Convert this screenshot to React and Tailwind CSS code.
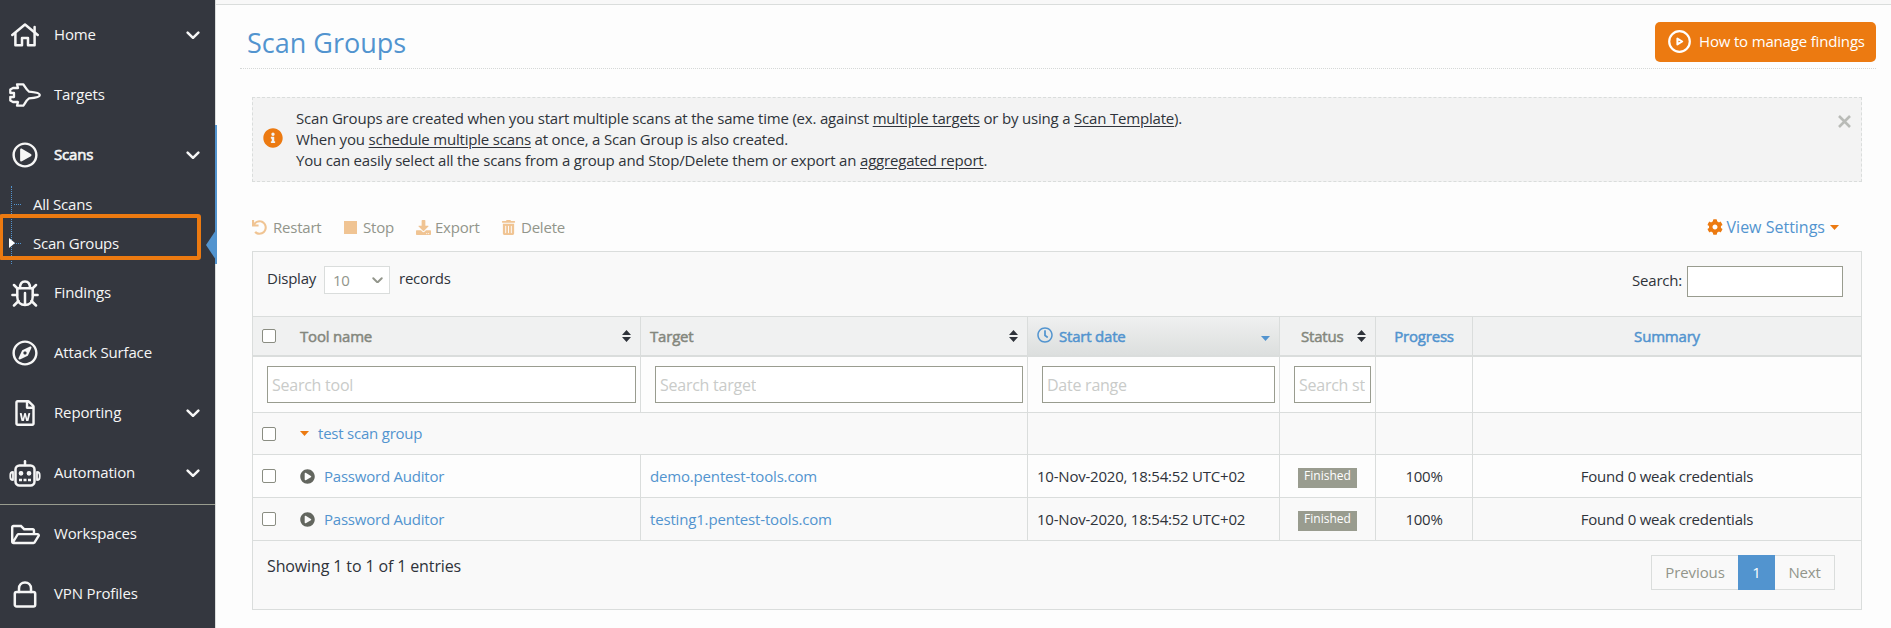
import React from "react";
import {
  FaRegCompass,
  FaRegFileWord,
  FaRegFolderOpen,
  FaRegPlayCircle,
  FaInfoCircle,
  FaUndo,
  FaDownload,
  FaTrashAlt,
  FaCog,
  FaRegClock,
  FaPlayCircle,
} from "react-icons/fa";

const stroke = {
  fill: "none",
  stroke: "currentColor",
  strokeWidth: 2.5,
  strokeLinejoin: "round",
  strokeLinecap: "round",
};

const HomeIcon = () => (
  <svg width="28" height="24" viewBox="0 0 28 24" {...stroke}>
    <path d="M1.3 12 L14 1.5 L26.7 12" />
    <path d="M4.4 10.5 V22.3 H11 V15 H17 V22.3 H23.6 V10.5" />
    <path d="M23.6 4 V9" />
  </svg>
);

const JetIcon = () => (
  <svg width="32" height="24" viewBox="0 0 32 24" {...stroke} strokeWidth="2.3">
    <path d="M8 1.3 H14.2 C16 3.5 17 6.5 20 8.6 C25 9 30.8 10.2 30.8 12 C30.8 13.8 25 15 20 15.4 C17 17.5 16 20.5 14.2 22.7 H8 L9 19 H4 L1.3 17.5 V14 H5 V10 H1.3 V6.5 L4 5 H9 Z" />
  </svg>
);

const BugIcon = () => (
  <svg width="28" height="27" viewBox="0 0 28 27" {...stroke}>
    <path d="M9 8 C9 3.3 11 1.5 14 1.5 S19 3.3 19 8" />
    <path d="M6.3 8.3 H21.7 V17 C21.7 22.5 18 25 14 25 S6.3 22.5 6.3 17 Z" />
    <path d="M14 13 V24 M1.4 15 H6 M22 15 H26.6 M3 5 L6.5 8.5 M25 5 L21.5 8.5 M3 25.5 L7.5 21 M25 25.5 L20.5 21" />
  </svg>
);

const RobotIcon = () => (
  <svg width="32" height="27" viewBox="0 0 32 27" {...stroke}>
    <path d="M16 1.2 V5" />
    <rect x="6.5" y="5.5" width="19" height="20" rx="4" />
    <path d="M4 12 C2 12 1.3 13 1.3 15 V17 C1.3 19 2 20 4 20 Z M28 12 C30 12 30.7 13 30.7 15 V17 C30.7 19 30 20 28 20 Z" strokeWidth="1.8" />
    <circle cx="12" cy="13.3" r="1.7" fill="currentColor" strokeWidth="1.4" />
    <circle cx="20" cy="13.3" r="1.7" fill="currentColor" strokeWidth="1.4" />
    <path d="M10 20 H22" strokeDasharray="3 1.5" strokeLinecap="butt" />
  </svg>
);

const LockIcon = () => (
  <svg width="24" height="27" viewBox="0 0 24 27" {...stroke}>
    <rect x="1.8" y="11" width="20.4" height="14.5" rx="1.8" />
    <path d="M6 11 V7.5 C6 3.8 8.6 1.5 12 1.5 S18 3.8 18 7.5 V11" />
  </svg>
);

const ChevronDown = ({ w = 14, className = "" }) => (
  <svg className={className} width={w} height={w * 0.62} viewBox="0 0 14 8.7" {...stroke}>
    <path d="M1.6 1.6 L7 7 L12.4 1.6" />
  </svg>
);

const Caret = ({ className = "" }) => (
  <svg className={className} width="9" height="5" viewBox="0 0 9 5" fill="currentColor">
    <path d="M0 0 H9 L4.5 5 Z" />
  </svg>
);

const SortIcon = () => (
  <svg className="shrink-0 text-[#2f333a]" width="9" height="12" viewBox="0 0 9 12" fill="currentColor">
    <path d="M0 5 L4.5 0 L9 5 Z M0 7 H9 L4.5 12 Z" />
  </svg>
);

function NavItem({ icon, label, chevron, active }) {
  return (
    <div className="flex h-[60px] shrink-0 items-center pl-[9px] pr-[15px] text-[15px] tracking-[-0.15px]">
      <span className="flex w-8 shrink-0 justify-center">{icon}</span>
      <span className={"mb-px ml-[13px] grow " + (active ? "[-webkit-text-stroke:0.6px]" : "")}>{label}</span>
      {chevron && <ChevronDown />}
    </div>
  );
}

function SubItem({ label }) {
  return (
    <div className="flex h-[39px] items-center pl-[14px] text-[15px] leading-none">
      <span className="w-[7px] border-t border-dotted border-[#5294cf]" />
      <span className="ml-3">{label}</span>
    </div>
  );
}

function Sidebar() {
  return (
    <nav className="relative flex h-[628px] w-[215px] shrink-0 flex-col bg-[#34373f] pt-[5px] text-[#f6f6f6]">
      <NavItem icon={<HomeIcon />} label="Home" chevron />
      <NavItem icon={<JetIcon />} label="Targets" />
      <NavItem icon={<FaRegPlayCircle size={26} />} label="Scans" chevron active />
      <div className="relative h-[78px] shrink-0">
        <SubItem label="All Scans" />
        <SubItem label="Scan Groups" />
        <div className="absolute left-[11px] top-[1px] h-[78px] border-l border-dotted border-[#5294cf]" />
        <svg className="absolute left-[9px] top-[53px]" width="6" height="10" viewBox="0 0 6 10" fill="#ffffff">
          <path d="M0 0 L6 5 L0 10 Z" />
        </svg>
        <div className="absolute left-[-1px] top-[29px] h-[46px] w-[202px] rounded-[3px] border-4 border-[#ec7a11]" />
      </div>
      <NavItem icon={<BugIcon />} label="Findings" />
      <NavItem icon={<FaRegCompass size={26} />} label="Attack Surface" />
      <NavItem icon={<FaRegFileWord size={26} />} label="Reporting" chevron />
      <NavItem icon={<RobotIcon />} label="Automation" chevron />
      <div className="mt-px h-px shrink-0 bg-[#999c8f]" />
      <div className="-mt-px flex flex-col">
        <NavItem icon={<FaRegFolderOpen size={29} />} label="Workspaces" />
        <NavItem icon={<LockIcon />} label="VPN Profiles" />
      </div>
      <div className="absolute left-[215px] top-[125px] h-[139px] w-[2px] bg-[#5294cf]" />
      <svg className="absolute left-[206px] top-[230px]" width="10" height="30" viewBox="0 0 10 30" fill="#5294cf">
        <path d="M10 0 V30 L0 15 Z" />
      </svg>
    </nav>
  );
}

const Tool = ({ icon, label, className = "" }) => (
  <div className={"flex items-center text-[#92958b] " + className}>
    <span className="text-[#f0c493]">{icon}</span>
    <span>{label}</span>
  </div>
);

const Check = () => <span className="h-[14px] w-[14px] shrink-0 rounded-[2px] border border-[#8a8d82] bg-white" />;

const grid = "grid grid-cols-[388px_387px_252px_96px_97px_1fr]";
const line = "border-r border-[#dadddc]";

const Field = ({ text }) => (
  <div className="ml-[14px] mr-[4px] mt-[9px] flex h-[37px] items-center overflow-hidden border border-[#999c8f] bg-white px-[4px] text-[16px] tracking-[-0.25px] whitespace-nowrap text-[#c9cbc9]">
    <span className="overflow-hidden">{text}</span>
  </div>
);

function ScanRow({ target, className }) {
  return (
    <div className={grid + " h-[43px] border-b border-[#dadddc] text-[15px] " + className}>
      <div className={line + " flex items-center pl-[9px]"}>
        <Check />
        <FaPlayCircle size={15} className="ml-6 text-[#63665f]" />
        <span className="ml-[9px] text-[#5294cf]">Password Auditor</span>
      </div>
      <div className={line + " flex items-center pl-[9px] tracking-[-0.17px] text-[#5294cf]"}>{target}</div>
      <div className={line + " flex items-center pl-[9px]"}>10-Nov-2020, 18:54:52 UTC+02</div>
      <div className={line + " flex items-center pl-[18px]"}>
        <span className="mt-[3px] h-5 w-[59px] bg-[#999c8f] text-center text-[12px] leading-[16px] tracking-normal text-white">Finished</span>
      </div>
      <div className={line + " flex items-center justify-center"}>100%</div>
      <div className="flex items-center justify-center">Found 0 weak credentials</div>
    </div>
  );
}

export default function App() {
  return (
    <div className="flex h-[628px] w-[1891px] overflow-hidden bg-[#fdfdfd] font-['Open_Sans',sans-serif] text-[15px] tracking-[-0.22px] text-[#2f333a]">
      <Sidebar />
      <main className="flex grow flex-col border-l border-[#dadddc]">
        <div className="h-[5px] shrink-0 border-b border-[#dadddc] bg-[#f8f8f8]" />
        <header className="ml-6 mr-[15px] flex h-16 shrink-0 justify-between border-b border-dotted border-[#d5d8d7]">
          <h1 className="ml-[7px] mt-[17px] text-[27px] leading-[41px] tracking-normal text-[#5294cf]">Scan Groups</h1>
          <div className="mt-[17px] flex h-10 w-[221px] items-center rounded-[5px] bg-[#ec7a11] pl-[13px] text-white">
            <svg className="mb-px" width="23" height="23" viewBox="0 0 23 23" {...stroke} strokeWidth="2.2">
              <circle cx="11.5" cy="11.5" r="10.3" />
              <path d="M9.4 8.6 V14.4 L14.2 11.5 Z" strokeWidth="2" />
            </svg>
            <span className="mb-px ml-[8px] whitespace-nowrap tracking-[-0.17px]">How to manage findings</span>
          </div>
        </header>

        <section className="ml-9 mr-[29px] mt-7 flex h-[85px] shrink-0 border border-dashed border-[#dadddc] bg-[#f3f3f3]">
          <FaInfoCircle size={20} className="ml-[10px] mt-[30px] text-[#ec7a11]" />
          <p className="ml-[13px] mt-[10px] grow leading-[21px] tracking-[-0.19px]">
            Scan Groups are created when you start multiple scans at the same time (ex. against{" "}
            <u className="underline-offset-2">multiple targets</u> or by using a <u className="underline-offset-2">Scan Template</u>).
            <br />
            When you <u className="underline-offset-2">schedule multiple scans</u> at once, a Scan Group is also created.
            <br />
            You can easily select all the scans from a group and Stop/Delete them or export an{" "}
            <u className="underline-offset-2">aggregated report</u>.
          </p>
          <svg className="mr-[10px] mt-[17px]" width="13" height="13" viewBox="0 0 13 13" stroke="#b9bbb7" strokeWidth="2.6">
            <path d="M1 1 L12 12 M12 1 L1 12" />
          </svg>
        </section>

        <div className="ml-9 mr-[29px] mt-[33px] flex h-[24px] shrink-0 items-center">
          <Tool icon={<FaUndo size={15} />} label="Restart" className="w-[82px] gap-[6px]" />
          <Tool icon={<span className="block h-[13px] w-[13px] bg-[#f0c493]" />} label="Stop" className="ml-[10px] w-[62px] gap-[6px]" />
          <Tool icon={<FaDownload size={15} />} label="Export" className="ml-[10px] w-[76px] gap-1" />
          <Tool icon={<FaTrashAlt size={15} />} label="Delete" className="ml-[9px] gap-[5px]" />
          <div className="ml-auto mr-[23px] flex items-center text-[16px] tracking-normal text-[#5294cf]">
            <FaCog size={16} className="text-[#ec7a11]" />
            <span className="ml-1">View Settings</span>
            <Caret className="ml-[5px] text-[#ec7a11]" />
          </div>
        </div>

        <section className="ml-9 mr-[29px] mt-[12px] h-[359px] shrink-0 border border-[#dadddc] bg-[#f9f9f9]">
          <div className="flex h-[64px] items-start pl-[14px]">
            <span className="mt-[14px] w-[49px] leading-[24px]">Display</span>
            <div className="ml-2 mt-[14px] flex h-7 w-[66px] items-center justify-between border border-[#dadddc] bg-white pl-2 pr-[6px] text-[#92958b]">
              10
              <ChevronDown w={11} />
            </div>
            <span className="ml-[9px] mt-[14px] leading-[24px]">records</span>
            <span className="ml-auto mt-[16px] leading-[24px]">Search:</span>
            <div className="ml-[5px] mr-[18px] mt-[14px] h-[31px] w-[156px] border border-[#999c8f] bg-white" />
          </div>

          <div className={grid + " h-[41px] border-b-2 border-t border-[#dadddc] bg-[#f0f1f1] tracking-[-0.2px] [-webkit-text-stroke:0.5px]"}>
            <div className={line + " flex items-center pl-[9px] pr-[9px] text-[#84877d]"}>
              <Check />
              <span className="ml-6 grow">Tool name</span>
              <SortIcon />
            </div>
            <div className={line + " flex items-center justify-between px-[9px] text-[#84877d]"}>
              Target
              <SortIcon />
            </div>
            <div className={line + " flex items-center bg-gradient-to-b from-[#eff0f0] to-[#dcdfde] px-[9px] text-[#5294cf]"}>
              <FaRegClock size={16} className="mb-[2px] [&_path]:stroke-none" />
              <span className="ml-[6px] grow">Start date</span>
              <Caret className="mt-1" />
            </div>
            <div className={line + " flex items-center justify-between pl-[21px] pr-[9px] text-[#84877d]"}>
              Status
              <SortIcon />
            </div>
            <div className={line + " flex items-center justify-center text-[#5294cf]"}>Progress</div>
            <div className="flex items-center justify-center text-[#5294cf]">Summary</div>
          </div>

          <div className={grid + " h-[56px] border-b border-[#dadddc] bg-[#fdfdfd]"}>
            <div className={line}><Field text="Search tool" /></div>
            <div className={line}><Field text="Search target" /></div>
            <div className={line}><Field text="Date range" /></div>
            <div className={line}><Field text="Search st" /></div>
            <div className={line} />
            <div />
          </div>

          <div className={grid + " h-[42px] border-b border-[#dadddc]"}>
            <div className={line + " col-span-2 flex items-center pl-[9px]"}>
              <Check />
              <Caret className="ml-6 text-[#ec7a11]" />
              <span className="ml-[9px] text-[#5294cf]">test scan group</span>
            </div>
            <div className={line} />
            <div className={line} />
            <div className={line} />
            <div />
          </div>

          <ScanRow target="demo.pentest-tools.com" className="bg-[#fdfdfd]" />
          <ScanRow target="testing1.pentest-tools.com" className="bg-[#f9f9f9]" />

          <div className="flex justify-between pl-[14px] pr-[26px]">
            <span className="mt-[13px] text-[16px] leading-[24px] tracking-[-0.13px]">Showing 1 to 1 of 1 entries</span>
            <div className="mt-[14px] flex h-[35px] text-[#92958b]">
              <div className="flex w-[87px] items-center justify-center border border-r-0 border-[#dadddc] tracking-[-0.1px]">Previous</div>
              <div className="flex w-[37px] items-center justify-center bg-[#5294cf] text-white">1</div>
              <div className="flex w-[60px] items-center justify-center border border-l-0 border-[#dadddc]">Next</div>
            </div>
          </div>
        </section>
      </main>
    </div>
  );
}
